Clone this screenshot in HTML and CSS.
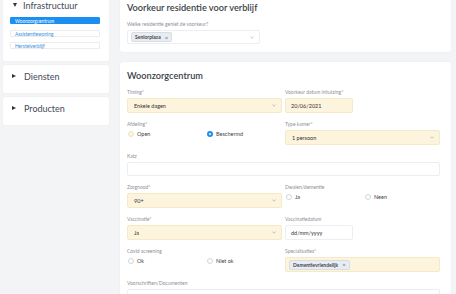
FILE: index.html
```html
<!DOCTYPE html>
<html lang="nl">
<head>
  <meta charset="UTF-8">
  <title>Woonzorgcentrum</title>
  <link rel="stylesheet" href="styles.css">
</head>
<body>
  <div class="layout">
    <aside class="sidebar">
      <section class="side-card">
        <div class="side-head"><span class="caret down"></span>Infrastructuur</div>
        <ul class="side-list">
          <li class="active">Woonzorgcentrum</li>
          <li>Assistentiewoning</li>
          <li>Herstelverblijf</li>
        </ul>
      </section>
      <section class="side-card">
        <div class="side-head"><span class="caret right"></span>Diensten</div>
      </section>
      <section class="side-card">
        <div class="side-head"><span class="caret right"></span>Producten</div>
      </section>
    </aside>

    <main class="content">
      <section class="card">
        <h2>Voorkeur residentie voor verblijf</h2>
        <div class="field">
          <label>Welke residentie geniet de voorkeur?</label>
          <div class="control multi residence">
            <span class="chip">Seniorplaza <span class="x">×</span></span>
            <svg class="chev" width="4" height="3" viewBox="0 0 4 3"><polyline points="0.5,0.8 2,2.2 3.5,0.8" fill="none" stroke="#aaa" stroke-width="0.6"/></svg>
          </div>
        </div>
      </section>

      <section class="card">
        <h2>Woonzorgcentrum</h2>
        <div class="form-grid">
          <div class="field">
            <label>Timing*</label>
            <div class="control req">Enkele dagen
              <svg class="chev" width="4" height="3" viewBox="0 0 4 3"><polyline points="0.5,0.8 2,2.2 3.5,0.8" fill="none" stroke="#999" stroke-width="0.6"/></svg>
            </div>
          </div>
          <div class="field">
            <label>Voorkeur datum inhuizing*</label>
            <div class="control req date">20/06/2021</div>
          </div>

          <div class="field">
            <label>Afdeling*</label>
            <div class="radios">
              <span class="radio"><span class="dot req"></span>Open</span>
              <span class="radio"><span class="dot on"></span>Beschermd</span>
            </div>
          </div>
          <div class="field">
            <label>Type kamer*</label>
            <div class="control req">1 persoon
              <svg class="chev" width="4" height="3" viewBox="0 0 4 3"><polyline points="0.5,0.8 2,2.2 3.5,0.8" fill="none" stroke="#999" stroke-width="0.6"/></svg>
            </div>
          </div>

          <div class="field wide">
            <label>Katz</label>
            <div class="control katz"></div>
          </div>

          <div class="field">
            <label>Zorgnood*</label>
            <div class="control req">90+
              <svg class="chev" width="4" height="3" viewBox="0 0 4 3"><polyline points="0.5,0.8 2,2.2 3.5,0.8" fill="none" stroke="#999" stroke-width="0.6"/></svg>
            </div>
          </div>
          <div class="field">
            <label>Dwalen/dementie</label>
            <div class="radios">
              <span class="radio"><span class="dot"></span>Ja</span>
              <span class="radio"><span class="dot"></span>Neen</span>
            </div>
          </div>

          <div class="field">
            <label>Vaccinatie*</label>
            <div class="control req">Ja
              <svg class="chev" width="4" height="3" viewBox="0 0 4 3"><polyline points="0.5,0.8 2,2.2 3.5,0.8" fill="none" stroke="#999" stroke-width="0.6"/></svg>
            </div>
          </div>
          <div class="field">
            <label>Vaccinatiedatum</label>
            <div class="control date">dd/mm/yyyy</div>
          </div>

          <div class="field">
            <label>Covid screening</label>
            <div class="radios">
              <span class="radio"><span class="dot"></span>Ok</span>
              <span class="radio"><span class="dot"></span>Niet ok</span>
            </div>
          </div>
          <div class="field">
            <label>Specialisaties*</label>
            <div class="control req multi">
              <span class="chip">Dementievriendelijk <span class="x">×</span></span>
            </div>
          </div>

          <div class="field wide">
            <label>Voorschriften/Documenten</label>
            <div class="control katz"></div>
          </div>
        </div>
      </section>
    </main>
  </div>
</body>
</html>
```

FILE: styles.css
```css
body {
  margin: 0;
  background: #f3f4f6;
  font-family: "Lato", "Liberation Sans", sans-serif;
  color: #3b3f46;
  overflow: hidden;
}

.layout {
  display: grid;
  grid-template-columns: 106px 331px;
  column-gap: 11px;
  padding-left: 3px;
  margin-top: -6px;
  align-items: start;
}

/* sidebar */
.sidebar {
  display: flex;
  flex-direction: column;
  gap: 4px;
}

.side-card {
  background: #fff;
  border-radius: 3px;
  padding: 5px 9px 11px 7px;
  box-shadow: 0 0 2px rgba(0, 0, 0, 0.04);
}

.side-head {
  display: flex;
  align-items: center;
  height: 12px;
  font-size: 9px;
  color: #454a58;
}

.caret {
  display: inline-block;
  width: 0;
  height: 0;
  margin-right: 6px;
}

.caret.down {
  margin-left: 3px;
  border-left: 2.5px solid transparent;
  border-right: 2.5px solid transparent;
  border-top: 4px solid #333;
}

.caret.right {
  margin-left: 2px;
  margin-right: 8px;
  border-top: 2.5px solid transparent;
  border-bottom: 2.5px solid transparent;
  border-left: 4px solid #333;
}

.side-list {
  list-style: none;
  margin: 6px 0 1px;
  padding: 0;
  display: flex;
  flex-direction: column;
  gap: 5.5px;
}

.side-list li {
  height: 7px;
  box-sizing: border-box;
  border: 0.5px solid #eaecef;
  border-radius: 1px;
  padding-left: 4px;
  font-size: 4.8px;
  line-height: 6px;
  color: #3a8de0;
}

.side-list li.active {
  background: #1b8ef2;
  border-color: #1b8ef2;
  color: #fff;
}

/* main cards */
.content {
  display: flex;
  flex-direction: column;
  gap: 10px;
}

.card {
  background: #fff;
  border-radius: 3px;
  padding: 7px 11px 8px 7px;
  box-shadow: 0 0 2px rgba(0, 0, 0, 0.05);
}

.card h2 {
  margin: 0 0 7px;
  font-size: 9.2px;
  line-height: 13px;
  font-weight: 600;
  color: #3a3e46;
}

.form-grid {
  display: grid;
  grid-template-columns: 155px 155px;
  column-gap: 3px;
  row-gap: 8px;
}

.field.wide {
  grid-column: 1 / 3;
}

.field label {
  display: block;
  font-size: 5px;
  line-height: 7px;
  margin-bottom: 2px;
  color: #8c9099;
}

.control {
  position: relative;
  height: 15px;
  box-sizing: border-box;
  border: 1px solid #eceef1;
  border-radius: 2px;
  background: #fff;
  padding: 0 6px;
  display: flex;
  align-items: center;
  font-size: 5.5px;
  color: #333;
}

.control.req {
  background: #fdf4de;
  border-color: #f6e9c6;
}

.control.residence {
  width: 133px;
  height: 14px;
}

.control.date {
  width: 68px;
  padding-left: 5px;
}

.control.katz {
  height: 14px;
}

.control.multi {
  padding-left: 3px;
}

.chev {
  position: absolute;
  right: 5px;
  top: 5px;
}

.chip {
  display: inline-flex;
  align-items: center;
  height: 10px;
  box-sizing: border-box;
  padding: 0 3px;
  border: 0.5px solid #d8dde5;
  border-radius: 2px;
  background: #e9edf2;
  font-size: 5px;
  font-weight: 700;
  color: #3f4550;
}

.chip .x {
  margin-left: 4px;
  font-weight: 400;
  font-size: 6px;
  color: #666;
}

.radios {
  display: grid;
  grid-template-columns: 79px 1fr;
  padding-left: 1px;
  height: 8px;
  align-items: center;
}

.radio {
  display: flex;
  align-items: center;
  font-size: 5.5px;
  color: #444;
}

.dot {
  width: 6px;
  height: 6px;
  box-sizing: border-box;
  border: 0.5px solid #d2d6dc;
  border-radius: 50%;
  background: #fff;
  margin-right: 3px;
}

.dot.req {
  background: #fdf4de;
  border-color: #f0e3c2;
}

.dot.on {
  border: 2px solid #1b8ef2;
}
```
